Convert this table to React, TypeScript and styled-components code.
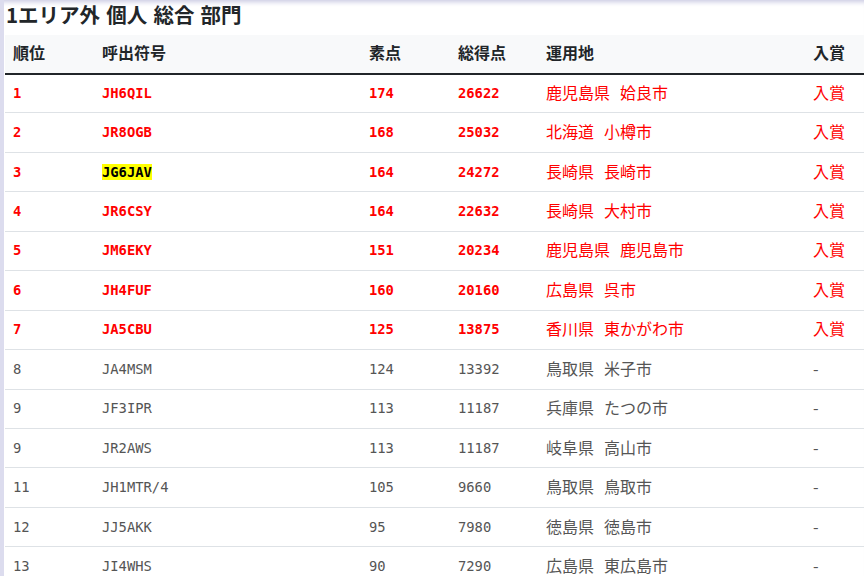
import React from "react";
import styled, { createGlobalStyle } from "styled-components";

const GlobalStyle = createGlobalStyle`
  html, body {
    margin: 0;
    padding: 0;
    background: #ffffff;
    overflow: hidden;
  }
  body {
    font-family: "Noto Sans CJK JP", "Noto Sans", sans-serif;
    color: #212529;
  }
`;

const Page = styled.div`
  min-height: 576px;
  padding-left: 5px;
  box-shadow: inset 4px 0 0 #dcdcee, inset 0 6px 5px -4px #c9c9e2;
`;

const Title = styled.h2`
  margin: 0;
  padding-left: 1px;
  font-size: 20.5px;
  font-weight: 700;
  line-height: 29px;
  height: 35px;
  word-spacing: 1.5px;
  color: #222629;
  white-space: nowrap;
`;

const Table = styled.table`
  width: 890px;
  border-collapse: collapse;
  table-layout: fixed;
`;

const HeadRow = styled.tr`
  background: #f8f9fa;
  border-bottom: 2px solid #212529;
`;

const Th = styled.th`
  height: 38.5px;
  padding: 0 0 3px 8px;
  box-sizing: border-box;
  text-align: left;
  font-size: 16px;
  font-weight: 700;
  color: #212529;
  white-space: nowrap;
`;

const Row = styled.tr`
  border-bottom: 1px solid #dee2e6;
`;

const Td = styled.td<{ $win: boolean; $mono?: boolean }>`
  height: 39.45px;
  box-sizing: border-box;
  padding: ${(p) => (p.$mono ? "0 0 1px 8px" : "0 0 3px 8px")};
  white-space: nowrap;
  color: ${(p) => (p.$win ? "#ff0000" : "#555555")};
  font-family: ${(p) =>
    p.$mono ? '"DejaVu Sans Mono", "Liberation Mono", monospace' : '"Noto Sans CJK JP", "Noto Sans", sans-serif'};
  font-size: ${(p) => (p.$mono ? "13.8px" : "16px")};
  font-weight: ${(p) => (p.$mono && p.$win ? 700 : 400)};
`;

const Mark = styled.span`
  background: #ffff00;
  color: #000000;
`;

const Gap = styled.span`
  display: inline-block;
  width: 10px;
`;

type Entry = {
  rank: string;
  call: string;
  raw: string;
  total: string;
  pref: string;
  city: string;
  win: boolean;
  mark?: boolean;
};

const data: Entry[] = [
  { rank: "1", call: "JH6QIL", raw: "174", total: "26622", pref: "鹿児島県", city: "姶良市", win: true },
  { rank: "2", call: "JR8OGB", raw: "168", total: "25032", pref: "北海道", city: "小樽市", win: true },
  { rank: "3", call: "JG6JAV", raw: "164", total: "24272", pref: "長崎県", city: "長崎市", win: true, mark: true },
  { rank: "4", call: "JR6CSY", raw: "164", total: "22632", pref: "長崎県", city: "大村市", win: true },
  { rank: "5", call: "JM6EKY", raw: "151", total: "20234", pref: "鹿児島県", city: "鹿児島市", win: true },
  { rank: "6", call: "JH4FUF", raw: "160", total: "20160", pref: "広島県", city: "呉市", win: true },
  { rank: "7", call: "JA5CBU", raw: "125", total: "13875", pref: "香川県", city: "東かがわ市", win: true },
  { rank: "8", call: "JA4MSM", raw: "124", total: "13392", pref: "鳥取県", city: "米子市", win: false },
  { rank: "9", call: "JF3IPR", raw: "113", total: "11187", pref: "兵庫県", city: "たつの市", win: false },
  { rank: "9", call: "JR2AWS", raw: "113", total: "11187", pref: "岐阜県", city: "高山市", win: false },
  { rank: "11", call: "JH1MTR/4", raw: "105", total: "9660", pref: "鳥取県", city: "鳥取市", win: false },
  { rank: "12", call: "JJ5AKK", raw: "95", total: "7980", pref: "徳島県", city: "徳島市", win: false },
  { rank: "13", call: "JI4WHS", raw: "90", total: "7290", pref: "広島県", city: "東広島市", win: false },
];

export default function App() {
  return (
    <>
      <GlobalStyle />
      <Page>
        <Title>1エリア外 個人 総合 部門</Title>
        <Table>
          <colgroup>
            <col style={{ width: 89 }} />
            <col style={{ width: 267 }} />
            <col style={{ width: 89 }} />
            <col style={{ width: 88 }} />
            <col style={{ width: 267 }} />
            <col style={{ width: 90 }} />
          </colgroup>
          <thead>
            <HeadRow>
              <Th>順位</Th>
              <Th>呼出符号</Th>
              <Th>素点</Th>
              <Th>総得点</Th>
              <Th>運用地</Th>
              <Th>入賞</Th>
            </HeadRow>
          </thead>
          <tbody>
            {data.map((e, i) => (
              <Row key={i}>
                <Td $win={e.win} $mono>{e.rank}</Td>
                <Td $win={e.win} $mono>{e.mark ? <Mark>{e.call}</Mark> : e.call}</Td>
                <Td $win={e.win} $mono>{e.raw}</Td>
                <Td $win={e.win} $mono>{e.total}</Td>
                <Td $win={e.win}>
                  {e.pref}
                  <Gap />
                  {e.city}
                </Td>
                <Td $win={e.win}>{e.win ? "入賞" : "-"}</Td>
              </Row>
            ))}
          </tbody>
        </Table>
      </Page>
    </>
  );
}
